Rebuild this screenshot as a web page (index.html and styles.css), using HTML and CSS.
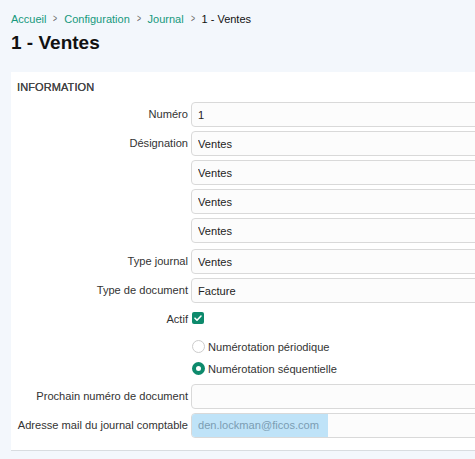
FILE: index.html
```html
<!DOCTYPE html>
<html lang="fr">
<head>
<meta charset="utf-8">
<link rel="stylesheet" href="styles.css">
</head>
<body>
<div class="page">
  <nav class="crumbs">
    <a>Accueil</a><span class="sep">&gt;</span><a>Configuration</a><span class="sep">&gt;</span><a>Journal</a><span class="sep">&gt;</span><span class="cur">1 - Ventes</span>
  </nav>
  <h1 class="title">1 - Ventes</h1>
  <section class="card">
    <h2 class="card-head">INFORMATION</h2>
    <div class="form">
      <label class="lbl">Numéro</label><div class="field"><input class="inp" value="1"></div>
      <label class="lbl">Désignation</label><div class="field stack">
        <input class="inp" value="Ventes">
        <input class="inp" value="Ventes">
        <input class="inp" value="Ventes">
        <input class="inp" value="Ventes">
      </div>
      <label class="lbl">Type journal</label><div class="field"><input class="inp" value="Ventes"></div>
      <label class="lbl">Type de document</label><div class="field"><input class="inp" value="Facture"></div>
      <label class="lbl check-lbl">Actif</label><div class="field check-field"><span class="check"><svg viewBox="0 0 12 12" width="12" height="12"><path d="M3 6.2 L5 8.2 L9 4" fill="none" stroke="#fff" stroke-width="1.6" stroke-linecap="round" stroke-linejoin="round"/></svg></span></div>
      <span class="lbl"></span><div class="field radios">
        <label class="radio"><span class="dot"></span>Numérotation périodique</label>
        <label class="radio"><span class="dot on"></span>Numérotation séquentielle</label>
      </div>
      <label class="lbl">Prochain numéro de document</label><div class="field"><input class="inp" value=""></div>
      <label class="lbl">Adresse mail du journal comptable</label><div class="field"><div class="inp mail"><span class="auto">den.lockman@ficos.com</span></div></div>
    </div>
  </section>
</div>
</body>
</html>
```
FILE: styles.css
```css
html, body {
  margin: 0;
  padding: 0;
  background: #f3f7fc;
  font-family: "Liberation Sans", Arial, sans-serif;
  color: #222;
}
.page {
  padding: 12px 0 0 11px;
  overflow: hidden;
}
.crumbs {
  font-size: 11px;
  line-height: 14px;
  display: flex;
  align-items: center;
}
.crumbs a {
  color: #16997c;
}
.crumbs .sep {
  color: #666;
  margin: 0 6px;
  font-size: 10px;
  transform: scaleX(0.7);
  display: inline-block;
}
.crumbs .cur {
  color: #111;
}
.title {
  font-size: 19px;
  font-weight: bold;
  margin: 6px 0 0 0;
  line-height: 22px;
  color: #111;
}
.card {
  margin-top: 18px;
  background: #fff;
  border-bottom: 1px solid #d8dce0;
  padding: 8px 0 12px 0;
}
.card-head {
  font-size: 11px;
  font-weight: normal;
  color: #444;
  margin: 0 0 8px 6px;
  line-height: 14px;
  letter-spacing: 0.1px;
  text-shadow: 0 0 0 #444;
}
.form {
  display: grid;
  grid-template-columns: 177px 1fr;
  column-gap: 3px;
  row-gap: 4px;
  align-items: start;
}
.lbl {
  text-align: right;
  font-size: 11.1px;
  color: #333;
  line-height: 25px;
  white-space: nowrap;
}
.field {
  min-width: 0;
}
.stack {
  display: flex;
  flex-direction: column;
  gap: 4px;
  margin-bottom: 2px;
}
.inp {
  box-sizing: border-box;
  display: block;
  width: 300px;
  height: 25px;
  border: 1px solid #d9d9d9;
  border-radius: 4px;
  background: #fcfcfc;
  font-family: "Liberation Sans", Arial, sans-serif;
  font-size: 11.1px;
  color: #222;
  padding: 0 6px;
  margin: 0;
  outline: none;
}
.check-lbl {
  line-height: 14px;
  margin-top: 5px;
}
.check-field {
  padding-top: 5px;
  height: 22px;
}
.check {
  display: block;
  width: 12px;
  height: 12px;
  border-radius: 2px;
  background: #0d8a6c;
  margin-left: 1px;
}
.check svg {
  display: block;
}
.radios {
  display: flex;
  flex-direction: column;
  gap: 9px;
  padding-top: 2px;
  padding-bottom: 5px;
}
.radio {
  display: flex;
  align-items: center;
  font-size: 11.1px;
  color: #333;
  line-height: 12px;
}
.dot {
  box-sizing: border-box;
  width: 13px;
  height: 13px;
  border-radius: 50%;
  border: 1px solid #ccc;
  background: #fff;
  margin: 0 3px 0 1px;
}
.dot.on {
  border: 4px solid #0d8a6c;
}
.mail {
  padding: 0;
  display: flex;
  overflow: hidden;
}
.auto {
  background: #bfe3f8;
  color: #7b9db3;
  padding: 0 6px;
  line-height: 23px;
  width: 136px;
  box-sizing: border-box;
  font-size: 11.1px;
}
```
